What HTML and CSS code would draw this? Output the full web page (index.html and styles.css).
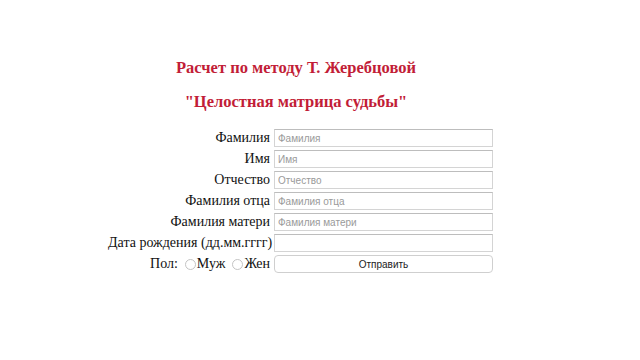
FILE: index.html
```html
<!DOCTYPE html>
<html lang="ru">
<head>
    <meta charset="UTF-8">
    <title>Целостная матрица судьбы</title>
    <link rel="stylesheet" href="styles.css">
</head>
<body>

    <div class="header">
        <h3 class="title">Расчет по методу Т. Жеребцовой</h3>
        <h3 class="title">"Целостная матрица судьбы"</h3>
    </div>

    <form class="matrix-form">
        <label class="lbl" for="fam">Фамилия</label>
        <input class="field" type="text" id="fam" placeholder="Фамилия">

        <label class="lbl" for="name">Имя</label>
        <input class="field" type="text" id="name" placeholder="Имя">

        <label class="lbl" for="otch">Отчество</label>
        <input class="field" type="text" id="otch" placeholder="Отчество">

        <label class="lbl" for="fam-father">Фамилия отца</label>
        <input class="field" type="text" id="fam-father" placeholder="Фамилия отца">

        <label class="lbl" for="fam-mother">Фамилия матери</label>
        <input class="field" type="text" id="fam-mother" placeholder="Фамилия матери">

        <label class="lbl" for="bdate">Дата рождения (дд.мм.гггг)</label>
        <input class="field" type="text" id="bdate">

        <div class="lbl sex">
            Пол:
            <input class="radio" type="radio" name="sex" id="male"><label class="opt" for="male">Муж</label>
            <input class="radio" type="radio" name="sex" id="female"><label for="female">Жен</label>
        </div>
        <input class="send" type="button" value="Отправить">
    </form>

</body>
</html>
```

FILE: styles.css
```css
body {
    margin: 0;
    font-family: "Liberation Serif", "Times New Roman", serif;
    font-size: 14px;
    color: #111;
    background-color: #fff;
}

.header {
    width: 592px;
    padding-top: 58px;
    text-align: center;
}

.title {
    margin: 0 0 14px 0;
    font-size: 16.5px;
    line-height: 20px;
    font-weight: bold;
    color: #c21d37;
}

.matrix-form {
    display: grid;
    grid-template-columns: 162px 219px;
    column-gap: 4px;
    row-gap: 3px;
    margin: 17px 0 0 108px;
    align-items: center;
}

.lbl {
    text-align: right;
    line-height: 18px;
    white-space: nowrap;
}

.field {
    box-sizing: border-box;
    height: 18px;
    margin: 0;
    padding: 0 3px;
    border: 1px solid #d4d4d4;
    border-top-color: #bdbdbd;
    font-family: "Liberation Sans", Arial, sans-serif;
    font-size: 10px;
    color: #333;
}

.field::placeholder {
    color: #9a9a9a;
}

.sex {
    display: flex;
    justify-content: flex-end;
    align-items: center;
}

.radio {
    appearance: none;
    width: 11px;
    height: 11px;
    margin: 1px 1px 0 7px;
    border: 1px solid #c4c4c4;
    border-radius: 50%;
    background-color: #fff;
}

.opt {
    margin-right: 0;
}

.send {
    box-sizing: border-box;
    height: 18px;
    margin: 0;
    border: 1px solid #cfcfcf;
    border-radius: 4px;
    background-color: #fff;
    font-family: "Liberation Sans", Arial, sans-serif;
    font-size: 10px;
    color: #222;
}
```
